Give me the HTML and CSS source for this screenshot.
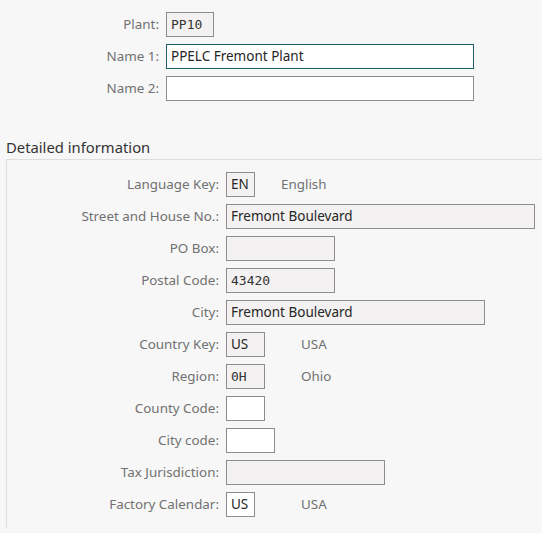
FILE: index.html
```html
<!DOCTYPE html>
<html lang="en">
<head>
    <meta charset="UTF-8">
    <meta name="viewport" content="width=device-width, initial-scale=1.0">
    <title>Plant Details</title>
    <link rel="stylesheet" href="styles.css">
</head>
<body>
    <div class="header-form">
        <div class="row">
            <label class="lbl">Plant:</label>
            <span class="box readonly mono w-48">PP10</span>
        </div>
        <div class="row">
            <label class="lbl">Name 1:</label>
            <span class="box focused w-308">PPELC Fremont Plant</span>
        </div>
        <div class="row">
            <label class="lbl">Name 2:</label>
            <span class="box w-308"></span>
        </div>
    </div>

    <h2 class="group-title">Detailed information</h2>
    <div class="group">
        <div class="row">
            <label class="lbl">Language Key:</label>
            <span class="key-cell cell-55"><span class="box readonly w-29">EN</span></span>
            <span class="desc">English</span>
        </div>
        <div class="row">
            <label class="lbl">Street and House No.:</label>
            <span class="box readonly w-309">Fremont Boulevard</span>
        </div>
        <div class="row">
            <label class="lbl">PO Box:</label>
            <span class="box readonly w-109"></span>
        </div>
        <div class="row">
            <label class="lbl">Postal Code:</label>
            <span class="box readonly mono w-109">43420</span>
        </div>
        <div class="row">
            <label class="lbl">City:</label>
            <span class="box readonly w-259">Fremont Boulevard</span>
        </div>
        <div class="row">
            <label class="lbl">Country Key:</label>
            <span class="key-cell cell-75"><span class="box readonly w-39">US</span></span>
            <span class="desc">USA</span>
        </div>
        <div class="row">
            <label class="lbl">Region:</label>
            <span class="key-cell cell-75"><span class="box readonly mono w-39">0H</span></span>
            <span class="desc">Ohio</span>
        </div>
        <div class="row">
            <label class="lbl">County Code:</label>
            <span class="box w-39"></span>
        </div>
        <div class="row">
            <label class="lbl">City code:</label>
            <span class="box w-49"></span>
        </div>
        <div class="row">
            <label class="lbl">Tax Jurisdiction:</label>
            <span class="box readonly w-159"></span>
        </div>
        <div class="row">
            <label class="lbl">Factory Calendar:</label>
            <span class="key-cell cell-75"><span class="box w-29">US</span></span>
            <span class="desc">USA</span>
        </div>
    </div>
</body>
</html>
```

FILE: styles.css
```css
body {
    margin: 0;
    padding: 0;
    background-color: #f7f7f7;
    font-family: "Noto Sans", Arial, sans-serif;
    font-size: 13.4px;
    color: #222;
    overflow: hidden;
}

.row {
    display: flex;
    align-items: center;
    height: 32px;
}

.lbl {
    text-align: right;
    color: #717171;
    white-space: nowrap;
    padding-right: 7px;
}

/* top part: Plant / Name 1 / Name 2 */
.header-form {
    padding-top: 8px;
}

.header-form .lbl {
    width: 159px;
}

.box {
    display: flex;
    align-items: center;
    box-sizing: border-box;
    height: 25px;
    padding-left: 4px;
    border: 1px solid #8c8c8c;
    background-color: #ffffff;
    color: #262626;
    font-size: 13.5px;
    white-space: nowrap;
}

.box.readonly {
    background-color: #f3f1f1;
}

.box.focused {
    border-color: #235d6c;
}

.mono {
    font-family: "DejaVu Sans Mono", monospace;
    font-size: 13px;
    color: #333;
}

.w-29 { width: 29px; }
.w-39 { width: 39px; }
.w-48 { width: 48px; }
.w-49 { width: 49px; }
.w-109 { width: 109px; }
.w-159 { width: 159px; }
.w-259 { width: 259px; }
.w-308 { width: 308px; }
.w-309 { width: 309px; }

.group-title {
    margin: 33px 0 2px 6px;
    font-size: 14.8px;
    font-weight: normal;
    line-height: 20px;
    color: #333;
}

.group {
    margin-left: 6px;
    padding: 8px 0 8px 0;
    border-top: 1px solid #dedede;
    border-left: 1px solid #dedede;
}

.group .lbl {
    width: 212px;
}

.key-cell {
    display: flex;
}

.cell-55 { width: 55px; }
.cell-75 { width: 75px; }

.desc {
    color: #717171;
}
```
